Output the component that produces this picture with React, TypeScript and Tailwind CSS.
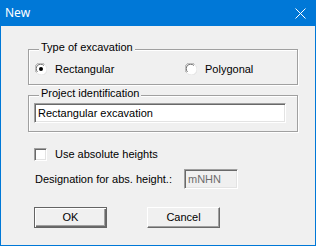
import React from 'react';

const font = { fontFamily: '"Liberation Sans", Arial, sans-serif' };

function Radio({ checked }: { checked?: boolean }) {
    return (
        <svg width="12" height="12" viewBox="0 0 12 12" className="shrink-0">
            <circle cx="6" cy="6" r="5.5" fill="#fff" />
            <path d="M1.5 9.5 A5 5 0 0 1 9.5 1.5" fill="none" stroke="#a0a0a0" strokeWidth="1" />
            <path d="M2.5 8.8 A4 4 0 0 1 8.8 2.5" fill="none" stroke="#696969" strokeWidth="1" />
            <path d="M10.5 2.5 A5 5 0 0 1 2.5 10.5" fill="none" stroke="#e3e3e3" strokeWidth="1" />
            {checked && <circle cx="6" cy="6" r="2" fill="#000" />}
        </svg>
    );
}

function GroupBox({ label, className, children }: { label: string; className?: string; children: React.ReactNode }) {
    return (
        <div className={`relative w-[270px] border border-[#a0a0a0] shadow-[inset_1px_1px_0_#fff,1px_1px_0_#fff] ${className ?? ''}`}>
            <span className="absolute -top-[9px] left-[10px] px-[2px] bg-[#f0f0f0] text-[11px] leading-[13px] text-black">
                {label}
            </span>
            {children}
        </div>
    );
}

export default function App() {
    return (
        <div className="w-[316px] h-[246px] bg-[#0078d7] flex flex-col select-none" style={font}>
            {/* title bar */}
            <div className="h-[26px] flex items-center justify-between pl-[5px] pr-[10px]">
                <span className="text-white text-[12px] leading-none" style={{ fontFamily: '"Noto Sans", sans-serif' }}>New</span>
                <svg width="11" height="11" viewBox="0 0 11 11">
                    <path d="M0.5 0.5 L10.5 10.5 M10.5 0.5 L0.5 10.5" stroke="#fff" strokeWidth="1" />
                </svg>
            </div>

            <div className="flex-1 mx-[1px] mb-[1px] bg-[#f0f0f0] pl-[27px] pt-[23px] text-[11px] text-black">
                <GroupBox label="Type of excavation" className="h-[36px]">
                    <div className="flex items-center h-[14px] mt-[12px] pl-[6px]">
                        <div className="flex items-center w-[150px]">
                            <Radio checked />
                            <span className="ml-[8px] leading-[13px]">Rectangular</span>
                        </div>
                        <div className="flex items-center">
                            <Radio />
                            <span className="ml-[8px] leading-[13px]">Polygonal</span>
                        </div>
                    </div>
                </GroupBox>

                <GroupBox label="Project identification" className="h-[37px] mt-[10px]">
                    <div className="pt-[7px] pl-[5px]">
                        <div className="w-[252px] h-[20px] bg-white border border-t-[#a0a0a0] border-l-[#a0a0a0] border-r-white border-b-white shadow-[inset_1px_1px_0_#696969,inset_-1px_-1px_0_#e3e3e3] flex items-center pl-[3px] leading-[13px]">
                            Rectangular excavation
                        </div>
                    </div>
                </GroupBox>

                <div className="flex items-center mt-[16px] ml-[6px] h-[13px]">
                    <div className="w-[13px] h-[13px] bg-white border border-t-[#a0a0a0] border-l-[#a0a0a0] border-r-white border-b-white shadow-[inset_1px_1px_0_#696969,inset_-1px_-1px_0_#e3e3e3]" />
                    <span className="ml-[8px] leading-[13px]">Use absolute heights</span>
                </div>

                <div className="flex items-center mt-[8px] ml-[7px] h-[20px]">
                    <span className="w-[149px] leading-[13px]">Designation for abs. height.:</span>
                    <div className="w-[54px] h-[20px] bg-[#f0f0f0] border border-t-[#a0a0a0] border-l-[#a0a0a0] border-r-white border-b-white shadow-[inset_1px_1px_0_#696969,inset_-1px_-1px_0_#e3e3e3] flex items-center pl-[3px] text-[#6d6d6d] leading-[13px]">
                        mNHN
                    </div>
                </div>

                <div className="flex mt-[18px] ml-[6px] gap-[40px]">
                    <button className="w-[73px] h-[21px] bg-[#f0f0f0] border border-[#646464] shadow-[inset_1px_1px_0_#fff,inset_-1px_-1px_0_#696969,inset_-2px_-2px_0_#a0a0a0] flex items-center justify-center leading-[13px] text-black">
                        OK
                    </button>
                    <button className="w-[73px] h-[21px] bg-[#f0f0f0] border border-t-white border-l-white border-r-[#696969] border-b-[#696969] shadow-[inset_-1px_-1px_0_#a0a0a0] flex items-center justify-center leading-[13px] text-black">
                        Cancel
                    </button>
                </div>
            </div>
        </div>
    );
}
